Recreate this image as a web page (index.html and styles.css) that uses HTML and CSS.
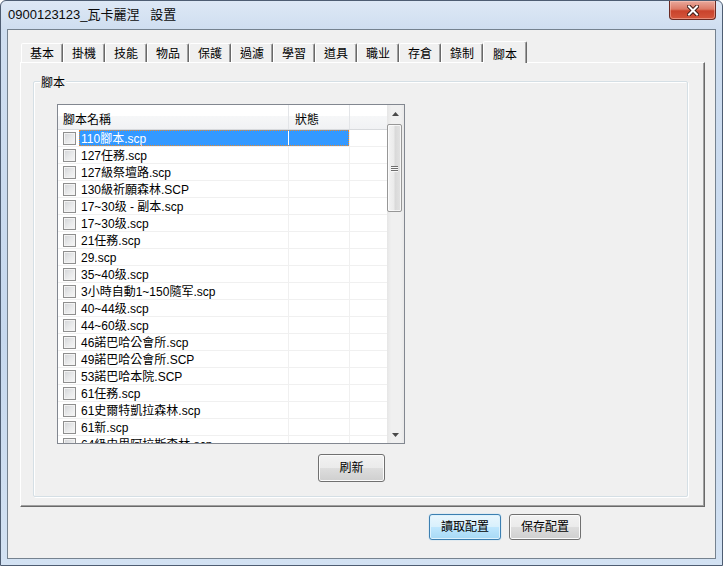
FILE: index.html
```html
<!DOCTYPE html>
<html lang="zh-Hant">
<head>
<meta charset="utf-8">
<title>設置</title>
<link rel="stylesheet" href="styles.css">
</head>
<body>
<div class="window">
  <div class="titlebar">
    <div class="title">0900123123_瓦卡麗涅   設置</div>
    <div class="close">
      <svg width="12" height="11" viewBox="0 0 12 11"><path d="M2 1.5 L10 9.5 M10 1.5 L2 9.5" stroke="#3d1a14" stroke-width="4" stroke-linecap="square"/><path d="M2 1.5 L10 9.5 M10 1.5 L2 9.5" stroke="#ffffff" stroke-width="2" stroke-linecap="square"/></svg>
    </div>
  </div>
  <div class="client">
    <div class="tabs">
      <div class="tab">基本</div>
      <div class="tab">掛機</div>
      <div class="tab">技能</div>
      <div class="tab">物品</div>
      <div class="tab">保護</div>
      <div class="tab">過濾</div>
      <div class="tab">學習</div>
      <div class="tab">道具</div>
      <div class="tab">職业</div>
      <div class="tab">存倉</div>
      <div class="tab">錄制</div>
      <div class="tab active">腳本</div>
    </div>
    <div class="panel">
      <div class="group">
        <div class="group-label">腳本</div>
        <div class="listview">
          <div class="lv-main">
            <div class="lv-head">
              <div class="h1">腳本名稱</div>
              <div class="h2">狀態</div>
              <div class="h3"></div>
            </div>
            <div class="lv-body">
              <div class="row sel"><div class="ck"><span class="box"></span></div><div class="cells"><div class="name">110腳本.scp</div><div class="st"></div></div><div class="fill"></div></div>
              <div class="row"><div class="ck"><span class="box"></span></div><div class="cells"><div class="name">127任務.scp</div><div class="st"></div></div><div class="fill"></div></div>
              <div class="row"><div class="ck"><span class="box"></span></div><div class="cells"><div class="name">127級祭壇路.scp</div><div class="st"></div></div><div class="fill"></div></div>
              <div class="row"><div class="ck"><span class="box"></span></div><div class="cells"><div class="name">130級祈願森林.SCP</div><div class="st"></div></div><div class="fill"></div></div>
              <div class="row"><div class="ck"><span class="box"></span></div><div class="cells"><div class="name">17~30级 - 副本.scp</div><div class="st"></div></div><div class="fill"></div></div>
              <div class="row"><div class="ck"><span class="box"></span></div><div class="cells"><div class="name">17~30级.scp</div><div class="st"></div></div><div class="fill"></div></div>
              <div class="row"><div class="ck"><span class="box"></span></div><div class="cells"><div class="name">21任務.scp</div><div class="st"></div></div><div class="fill"></div></div>
              <div class="row"><div class="ck"><span class="box"></span></div><div class="cells"><div class="name">29.scp</div><div class="st"></div></div><div class="fill"></div></div>
              <div class="row"><div class="ck"><span class="box"></span></div><div class="cells"><div class="name">35~40级.scp</div><div class="st"></div></div><div class="fill"></div></div>
              <div class="row"><div class="ck"><span class="box"></span></div><div class="cells"><div class="name">3小時自動1~150隨军.scp</div><div class="st"></div></div><div class="fill"></div></div>
              <div class="row"><div class="ck"><span class="box"></span></div><div class="cells"><div class="name">40~44级.scp</div><div class="st"></div></div><div class="fill"></div></div>
              <div class="row"><div class="ck"><span class="box"></span></div><div class="cells"><div class="name">44~60级.scp</div><div class="st"></div></div><div class="fill"></div></div>
              <div class="row"><div class="ck"><span class="box"></span></div><div class="cells"><div class="name">46諾巴哈公會所.scp</div><div class="st"></div></div><div class="fill"></div></div>
              <div class="row"><div class="ck"><span class="box"></span></div><div class="cells"><div class="name">49諾巴哈公會所.SCP</div><div class="st"></div></div><div class="fill"></div></div>
              <div class="row"><div class="ck"><span class="box"></span></div><div class="cells"><div class="name">53諾巴哈本院.SCP</div><div class="st"></div></div><div class="fill"></div></div>
              <div class="row"><div class="ck"><span class="box"></span></div><div class="cells"><div class="name">61任務.scp</div><div class="st"></div></div><div class="fill"></div></div>
              <div class="row"><div class="ck"><span class="box"></span></div><div class="cells"><div class="name">61史爾特凱拉森林.scp</div><div class="st"></div></div><div class="fill"></div></div>
              <div class="row"><div class="ck"><span class="box"></span></div><div class="cells"><div class="name">61新.scp</div><div class="st"></div></div><div class="fill"></div></div>
              <div class="row"><div class="ck"><span class="box"></span></div><div class="cells"><div class="name">64級史里阿拉斯森林.scp</div><div class="st"></div></div><div class="fill"></div></div>
            </div>
          </div>
          <div class="scrollbar">
            <div class="sb-btn"><svg width="7" height="4" viewBox="0 0 7 4"><polygon points="0,4 3.5,0 7,4" fill="#4a4a4a"/></svg></div>
            <div class="sb-track">
              <div class="sb-thumb"><span class="grip"></span><span class="grip"></span><span class="grip"></span></div>
            </div>
            <div class="sb-btn"><svg width="7" height="4" viewBox="0 0 7 4"><polygon points="0,0 7,0 3.5,4" fill="#4a4a4a"/></svg></div>
          </div>
        </div>
        <div class="btn refresh">刷新</div>
      </div>
    </div>
    <div class="footer">
      <div class="btn wide primary">讀取配置</div>
      <div class="btn wide">保存配置</div>
    </div>
  </div>
</div>
</body>
</html>
```

FILE: styles.css
```css
* {
  box-sizing: border-box;
  margin: 0;
  padding: 0;
}

html, body {
  width: 723px;
  height: 566px;
  overflow: hidden;
}

body {
  font-family: "Liberation Sans", "Noto Sans CJK TC", sans-serif;
  font-size: 12px;
  line-height: 1;
  color: #000;
  background: #ffffff;
}

.window {
  width: 723px;
  height: 566px;
  display: flex;
  flex-direction: column;
  border: 1px solid #4e5d72;
  border-radius: 6px 6px 0 0;
  background: linear-gradient(to bottom, #dde8f5 0px, #cfdef0 28px, #c6d8ee 60%, #d3e2f3 100%);
}

.titlebar {
  height: 28px;
  flex: none;
  display: flex;
  align-items: flex-start;
  padding-left: 7px;
}

.title {
  font-size: 13px;
  line-height: 16px;
  padding-top: 6px;
  white-space: pre;
  color: #0b0b0b;
}

.close {
  margin-left: auto;
  margin-right: 6px;
  width: 47px;
  height: 19px;
  border: 1px solid #6a2a22;
  border-top: none;
  border-radius: 0 0 4px 4px;
  background: linear-gradient(to bottom, #e9a99c 0%, #dc7a66 45%, #c9432c 55%, #d4563c 100%);
  box-shadow: inset 0 0 0 1px rgba(255, 210, 200, 0.45);
  display: flex;
  align-items: center;
  justify-content: center;
}

.client {
  flex: 1;
  margin: 0 6px 6px 6px;
  border: 1px solid #75828f;
  background: #f0f0f0;
  padding: 11px 0 0 12px;
  display: flex;
  flex-direction: column;
}

.tabs {
  display: flex;
  align-items: flex-end;
  height: 21px;
  padding-left: 1px;
}

.tab {
  width: 42px;
  height: 19px;
  border: 1px solid;
  border-bottom: none;
  border-color: #ffffff #696969 transparent #ffffff;
  border-radius: 2px 2px 0 0;
  box-shadow: inset -1px 0 #a0a0a0;
  background: #f0f0f0;
  text-align: center;
  line-height: 14px;
  padding-top: 3px;
}

.tab.active {
  width: 44px;
  height: 22px;
  margin-bottom: -1px;
  padding-top: 6px;
  position: relative;
  z-index: 1;
}

.panel {
  width: 685px;
  height: 445px;
  flex: none;
  border: 1px solid;
  border-color: #ffffff #696969 #696969 #ffffff;
  box-shadow: inset -1px -1px #a0a0a0;
  padding: 18px 0 0 12px;
}

.group {
  width: 655px;
  height: 416px;
  border: 1px solid #d5dfe5;
  border-radius: 2px;
  box-shadow: inset 1px 1px #ffffff, 1px 1px #ffffff;
}

.group-label {
  width: fit-content;
  height: 14px;
  line-height: 14px;
  margin: -6px 0 0 6px;
  padding: 0 1px;
  background: #f0f0f0;
}

.listview {
  width: 348px;
  height: 340px;
  margin: 14px 0 0 23px;
  border: 1px solid #828790;
  background: #ffffff;
  display: flex;
}

.lv-main {
  width: 329px;
  display: flex;
  flex-direction: column;
  overflow: hidden;
}

.lv-head {
  height: 25px;
  flex: none;
  display: flex;
  background: linear-gradient(to bottom, #ffffff 0%, #ffffff 45%, #f6f7f8 46%, #f1f2f4 100%);
  border-bottom: 1px solid #d8dadd;
}

.lv-head > div {
  line-height: 14px;
  padding-top: 8px;
}

.h1 {
  width: 230px;
  padding-left: 5px;
}

.h2 {
  width: 61px;
  padding-left: 6px;
  border-left: 1px solid #e3e5e8;
}

.h3 {
  flex: 1;
  border-left: 1px solid #e3e5e8;
}

.lv-body {
  flex: 1;
  overflow: hidden;
}

.row {
  height: 17px;
  display: flex;
  border-bottom: 1px solid #f0f0f0;
}

.ck {
  width: 21px;
  flex: none;
  display: flex;
  align-items: center;
  padding-left: 5px;
}

.box {
  display: block;
  width: 13px;
  height: 13px;
  border: 1px solid #8f8f8f;
  background: linear-gradient(135deg, #d2d4d7 0%, #e9eaeb 55%, #f7f7f7 100%);
  box-shadow: inset 0 0 0 1px #f3f3f3;
}

.cells {
  display: flex;
  flex: none;
  width: 270px;
}

.name {
  width: 209px;
  padding: 2px 0 0 2px;
  line-height: 14px;
  white-space: nowrap;
  overflow: hidden;
}

.st {
  width: 61px;
  border-left: 1px solid #f0f0f0;
}

.fill {
  flex: 1;
  border-left: 1px solid #f0f0f0;
}

.row.sel .name,
.row.sel .st {
  background: #3399ff;
  color: #ffffff;
}

.row.sel .st {
  border-left-color: #ffffff;
}

.row.sel .cells {
  outline: 1px dotted #e8872a;
  outline-offset: -1px;
}

.scrollbar {
  width: 17px;
  flex: none;
  display: flex;
  flex-direction: column;
  background: linear-gradient(to right, #e6e6e6 0%, #f0f0f0 25%, #f0f0f0 80%, #e9e9e9 100%);
}

.sb-btn {
  height: 17px;
  flex: none;
  display: flex;
  align-items: center;
  justify-content: center;
}

.sb-track {
  flex: 1;
  padding: 2px 1px 0 0;
}

.sb-thumb {
  width: 15px;
  height: 88px;
  border: 1px solid #979797;
  border-radius: 2px;
  background: linear-gradient(to right, #f3f3f3 0%, #ebebeb 45%, #d9d9d9 55%, #e3e3e3 100%);
  box-shadow: inset 0 0 0 1px rgba(255, 255, 255, 0.7);
  display: flex;
  flex-direction: column;
  align-items: center;
  justify-content: center;
  gap: 1px;
}

.grip {
  display: block;
  width: 7px;
  height: 1px;
  background: #6e6e6e;
  box-shadow: 0 1px #f8f8f8;
}

.btn {
  display: flex;
  align-items: center;
  justify-content: center;
  border: 1px solid #707070;
  border-radius: 3px;
  background: linear-gradient(to bottom, #f2f2f2 0%, #ebebeb 48%, #dddddd 52%, #cfcfcf 100%);
  box-shadow: inset 0 0 0 1px #fbfbfb;
  line-height: 14px;
  font-size: 12px;
}

.refresh {
  width: 67px;
  height: 28px;
  margin: 10px 0 0 284px;
}

.footer {
  display: flex;
  gap: 8px;
  margin: 7px 0 0 409px;
}

.btn.wide {
  width: 72px;
  height: 26px;
}

.btn.primary {
  border-color: #3c7fb1;
  background: linear-gradient(to bottom, #eaf6fd 0%, #d9f0fc 48%, #bee6fd 52%, #a7d9f5 100%);
  box-shadow: inset 0 0 0 1px #ddf2fd, 0 0 1px #55b5f0;
}
```
